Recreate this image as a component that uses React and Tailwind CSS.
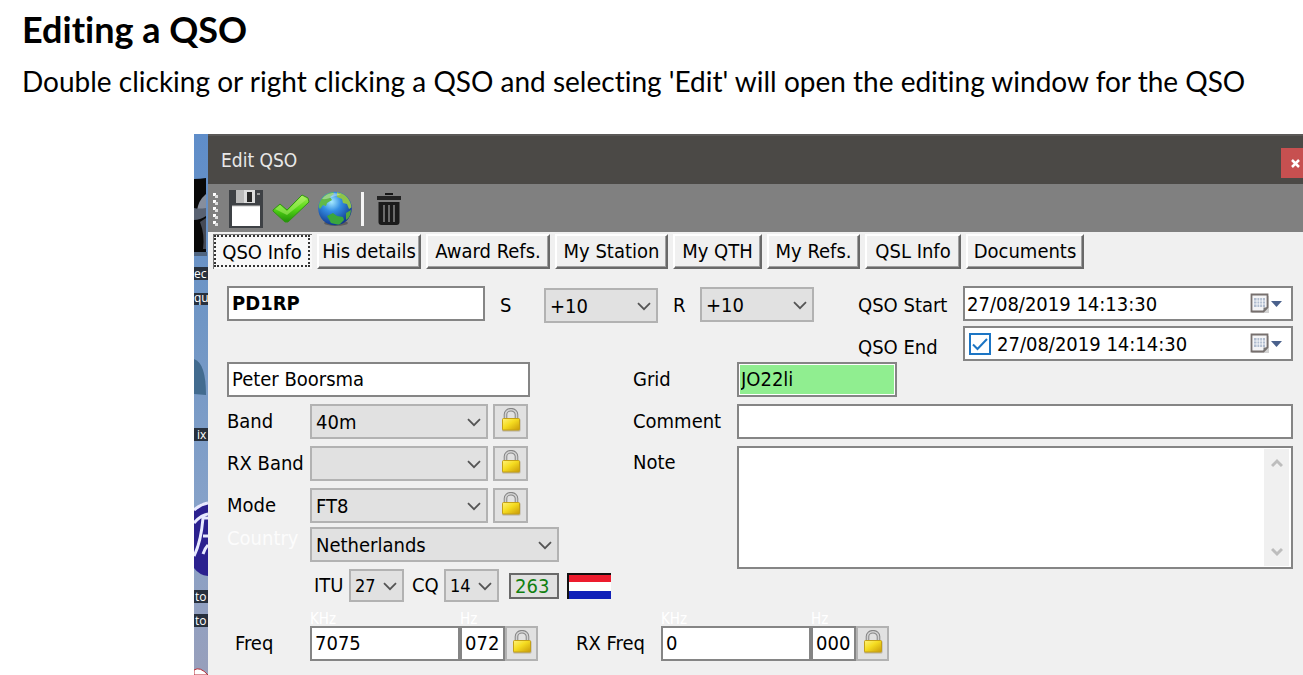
const tabs = [
  { label: 'QSO Info', width: 'w-[99px]', active: true },
  { label: 'His details', width: 'w-[104px]' },
  { label: 'Award Refs.', width: 'w-[124px]' },
  { label: 'My Station', width: 'w-[113px]' },
  { label: 'My QTH', width: 'w-[89px]' },
  { label: 'My Refs.', width: 'w-[93px]' },
  { label: 'QSL Info', width: 'w-[96px]' },
  { label: 'Documents', width: 'w-[118px]' },
]

const fieldClass = 'border-2 border-[#858585] bg-white outline-none h-[35px] px-[3px] pb-[2px]'

function Select({ id, label, value, className = '', small }) {
  return (
    <div className={`relative shrink-0 ${className}`}>
      <select
        id={id}
        aria-label={label}
        defaultValue={value}
        className={`block w-full h-full appearance-none border-2 border-[#b2b2b2] bg-[#e1e1e1] pl-1 outline-none ${small ? 'text-[18px]' : ''}`}
      >
        <option>{value}</option>
      </select>
      <svg viewBox="0 0 14 9" className="absolute right-[7px] top-1/2 -mt-[4px] w-[14px] h-[9px] pointer-events-none">
        <path d="M1 1.2 7 7.2 13 1.2" fill="none" stroke="#555" strokeWidth="1.8" />
      </svg>
    </div>
  )
}

function Lock() {
  return (
    <svg viewBox="0 0 20 25" className="w-5 h-[25px]">
      <defs>
        <linearGradient id="brass" x1="0" x2="1" y1="0" y2="1">
          <stop offset="0" stopColor="#fff27a" />
          <stop offset=".45" stopColor="#f5dc20" />
          <stop offset="1" stopColor="#c99a08" />
        </linearGradient>
      </defs>
      <path d="M4.500 12V6.500a5.500 4.800 0 0 1 11 0V12" fill="none" stroke="#858585" strokeWidth="3.600" />
      <path d="M4.500 12V6.500a5.500 4.800 0 0 1 11 0V12" fill="none" stroke="#d2d2d2" strokeWidth="1.600" />
      <rect x="1" y="10.500" width="18.500" height="13" rx="1.500" fill="#a0906a" opacity=".6" />
      <rect x="1.500" y="10.500" width="17" height="11.500" rx="1" fill="url(#brass)" stroke="#c4a117" />
    </svg>
  )
}

function LockButton({ label, className = 'w-[35px] h-[35px]' }) {
  return (
    <button aria-label={label} className={`flex items-center justify-center shrink-0 border-2 border-[#b2b2b2] bg-[#e1e1e1] pb-[2px] ${className}`}>
      <Lock />
    </button>
  )
}

function CalendarButton({ label }) {
  return (
    <button aria-label={label} className="shrink-0 mr-2">
      <svg viewBox="0 0 34 22" className="w-[34px] h-[22px]">
        <path d="M3 3h17v17H3z" fill="#aaa" opacity=".5" />
        <path d="M2.500 1.500h16v13l-4 4h-12z" fill="#f4f4f6" stroke="#77706e" strokeWidth="1.800" />
        <path d="M5 5h11v9H5z" fill="#b0bccf" />
        <path d="M5 8h11M5 11h11M8 5v9M10.700 5v9M13.400 5v9" stroke="#fff" strokeWidth=".8" />
        <path d="M14.500 18.500v-4h4z" fill="#777" />
        <path d="M22 8h11l-5.500 6z" fill="#4a618c" />
      </svg>
    </button>
  )
}

function DateField({ id, value, checkbox }) {
  return (
    <div className="flex-1 min-w-0 flex items-center h-[35px] border-2 border-[#858585] bg-white">
      {checkbox && (
        <span className="relative shrink-0 ml-1 w-[22px] h-[22px]">
          <input type="checkbox" aria-label="QSO End set" defaultChecked className="block w-full h-full appearance-none border-2 border-[#1c75c4] bg-white" />
          <svg viewBox="0 0 22 22" className="absolute inset-0 pointer-events-none">
            <path d="M4 11.500 8.500 16 18 6" fill="none" stroke="#1c75c4" strokeWidth="2" />
          </svg>
        </span>
      )}
      <input id={id} defaultValue={value} className={`flex-1 min-w-0 h-full outline-none bg-transparent ${checkbox ? 'pl-[6px]' : 'pl-[2px]'}`} />
      <CalendarButton label="Open calendar" />
    </div>
  )
}

function BandRow({ id, label, value }) {
  return (
    <div className="flex items-center">
      <label htmlFor={id} className="w-[83px] shrink-0 whitespace-nowrap pb-[2px]">{label}</label>
      <Select id={id} value={value} className="w-[178px] h-[35px] mr-[5px]" />
      <LockButton label={`Lock ${label}`} />
    </div>
  )
}

function Frequency({ id, label, khz, hz, className }) {
  return (
    <div className="flex items-end">
      <label htmlFor={id} className={`h-[35px] leading-[35px] shrink-0 ${className}`}>{label}</label>
      <div className="w-[150px]">
        <label htmlFor={id} className="block h-[15px] leading-[17px] text-[15px] text-white">KHz</label>
        <input id={id} defaultValue={khz} className={`block w-full ${fieldClass}`} />
      </div>
      <div className="w-[45px]">
        <label htmlFor={`${id}-hz`} className="block h-[15px] leading-[17px] text-[15px] text-white">Hz</label>
        <input id={`${id}-hz`} defaultValue={hz} className={`block w-full ${fieldClass}`} />
      </div>
      <LockButton label={`Lock ${label}`} className="w-[33px] h-[35px]" />
    </div>
  )
}

function Toolbar() {
  return (
    <div className="flex items-center h-12 bg-[#808080] pl-1 pt-[2px]">
      <svg viewBox="0 0 8 34" className="w-2 h-[34px] mr-[9px]">
        {[2, 9, 16, 23, 30].map((y) => (
          <g key={y}>
            <rect x="1" y={y - 1} width="3" height="3" fill="#fff" />
            <rect x="3" y={y + 1} width="3" height="3" fill="#ddd" />
          </g>
        ))}
      </svg>
      <button aria-label="Save">
        <svg viewBox="0 0 34 38" className="w-[34px] h-[38px]">
          <path d="M0 0h34v38H0z" fill="#3e4145" />
          <path d="M7 0h19v13H7z" fill="#dcdcdc" />
          <path d="M7 0h8v13H7z" fill="#bbb" />
          <path d="M18 2h5v10h-5z" fill="#282828" />
          <path d="M28 3h3v2h-3z" fill="#999" />
          <path d="M3 16h28v20H3z" fill="#fff" />
          <path d="M3 16h28" stroke="#c8c8c8" />
        </svg>
      </button>
      <button aria-label="Confirm" className="ml-[9px]">
        <svg viewBox="0 0 38 30" className="w-[38px] h-[30px]">
          <defs>
            <linearGradient id="leaf" x1="0" y1="0" x2="0" y2="1">
              <stop offset="0" stopColor="#a6ec55" />
              <stop offset=".5" stopColor="#55d916" />
              <stop offset="1" stopColor="#219008" />
            </linearGradient>
          </defs>
          <path d="M1 16 8 10l7 6L30 1l6 3 1 4L16 28h-3L1 17z" fill="url(#leaf)" stroke="#329414" />
          <path d="m3 15 5-4 7 6L30 2l5 3-20 16z" fill="#b3ef72" opacity=".5" />
        </svg>
      </button>
      <button aria-label="Look up online" className="ml-[7px]">
        <svg viewBox="0 0 36 36" className="w-9 h-9">
          <defs>
            <radialGradient id="sea" cx=".4" cy=".3" r=".7">
              <stop offset="0" stopColor="#a6eaff" />
              <stop offset=".4" stopColor="#348fe4" />
              <stop offset="1" stopColor="#12388d" />
            </radialGradient>
            <clipPath id="ball"><circle cx="18" cy="17.500" r="16.500" /></clipPath>
          </defs>
          <ellipse cx="19" cy="32" rx="12" ry="3" fill="#444" opacity=".6" />
          <circle cx="18" cy="17.500" r="16.800" fill="url(#sea)" />
          <g clipPath="url(#ball)">
            <path d="M1 15 3 7l7-5 6-2 1 3-4 3 2 3-5 3-1 3-3-1-3 4z" fill="#62b949" />
            <path d="m20 1 8 2 5 5 2 8-3 2-2-5-4-1-1-4-5-2z" fill="#8dc34a" />
            <path d="m10 25 6-3 4 3 6 1 1 3-5 5-8-2z" fill="#3ba63d" />
            <path d="m29 22 5-3-1 7-4 3z" fill="#53a640" />
            <path d="M5 8c4-6 13-8 19-4-7 0-12 5-19 4z" fill="#fff" opacity=".35" />
          </g>
        </svg>
      </button>
      <span className="w-[3px] h-[34px] bg-[#f5f5f5] ml-2" />
      <button aria-label="Delete" className="ml-[13px]">
        <svg viewBox="0 0 24 34" className="w-6 h-[34px]">
          <path d="M8 1h8v2H8z" fill="#171717" />
          <path d="M0 4h24v4H0z" fill="#242424" />
          <path d="M1.500 10h21v20q0 3-3 3h-15q-3 0-3-3z" fill="#1b1b1b" />
          <path d="M7 13v17M12 13v17M17 13v17" stroke="#858585" strokeWidth="1.500" />
        </svg>
      </button>
    </div>
  )
}

// sliver of the desktop that shows behind the dialog
function Desktop() {
  return (
    <div className="w-[14px] shrink-0 overflow-hidden bg-[#7598c6]">
      <svg viewBox="0 0 14 541" className="w-[14px] h-[541px]" fontFamily="'Open Sans', sans-serif" fontSize="12" fill="#fff">
        <defs>
          <linearGradient id="sky" x1="0" y1="0" x2="0" y2="1">
            <stop offset="0" stopColor="#5f8dc9" />
            <stop offset=".35" stopColor="#7096c5" />
            <stop offset=".7" stopColor="#87a2c9" />
            <stop offset="1" stopColor="#989fbb" />
          </linearGradient>
        </defs>
        <path d="M0 0h14v541H0z" fill="url(#sky)" />
        <path d="M0 45q6 0 12-1v74H0z" fill="#080808" />
        <path d="M2 84q1-14 6-20l4-4v20q-6 4-12 4z" fill="#868e9d" />
        <path d="M0 74q5 1 12 0v8q-6 4-12 4z" fill="#596272" />
        <path d="m6 88 6-4v31H9q2-14-3-27z" fill="#454a56" />
        <path d="M0 118h13v4H0z" fill="#506580" />
        <path d="M0 225q12 4 12 36l-12-1z" fill="#426b8f" />
        <path d="M0 375q8-7 14-7v74q-9-1-14-8z" fill="#2b218f" />
        <path d="M0 376q7-6 14-7M0 389q7-8 14-9M0 422q7-14 9-38h5M9 402h5M9 420q2-6 5-9" fill="none" stroke="#e8eaff" strokeWidth="3" />
        <path d="M0 133h14v13H0zM0 159h14v12H0zM0 294h14v13H0zM0 456h14v13H0zM0 480h14v13H0z" fill="#27303d" />
        <text x="0" y="144">ec</text>
        <text x="0" y="168">qu</text>
        <text x="3" y="305">ix</text>
        <text x="1" y="467">to</text>
        <text x="1" y="491">to</text>
        <path d="M0 536q6-4 14 5H0z" fill="#fff" stroke="#b52b35" />
      </svg>
    </div>
  )
}

export default function App() {
  return (
    <div className="min-h-screen flex flex-col bg-white text-black overflow-hidden">
      <header className="pl-[22px] h-[134px] shrink-0 whitespace-nowrap font-['Lato','Noto_Sans',sans-serif] [font-variant-ligatures:none]">
        <h1 className="pt-2 text-[36px] leading-[42px] font-bold">Editing a QSO</h1>
        <p className="pt-[13px] text-[28px] leading-[36px]">
          Double clicking or right clicking a QSO and selecting 'Edit' will open the editing window for the QSO
        </p>
      </header>

      <main className="flex-1 flex ml-[194px] text-[20px] leading-6 font-['DejaVu_Sans_Condensed','Noto_Sans',sans-serif]">
        <Desktop />
        <section className="flex-1 min-w-0 bg-[#f0f0f0]">
          <div className="flex items-center justify-between h-[50px] bg-[#4b4946] border-t-2 border-[#5b5957] pl-[13px] text-[#e8e8e8]">
            <h2 className="text-[19px]">Edit QSO</h2>
            <button aria-label="Close" className="flex items-center justify-end w-[22px] h-[30px] mt-[6px] pr-[3px] bg-[#c75050]">
              <svg viewBox="0 0 9 9" className="w-[9px] h-[9px]">
                <path d="m1 1 7 7M8 1 1 8" stroke="#fff" strokeWidth="2.500" />
              </svg>
            </button>
          </div>

          <Toolbar />

          <nav className="flex gap-[5px] pl-[5px] pt-[2px]">
            {tabs.map(({ label, width, active }) => (
              <button
                key={label}
                className={
                  active
                    ? `${width} h-[35px] shrink-0 whitespace-nowrap pr-[2px] pb-[2px] bg-[#f8f8f8] border-t border-l border-[#777]`
                    : `${width} h-[35px] shrink-0 whitespace-nowrap border-2 border-t-white border-l-white border-r-[#696969] border-b-[#696969] shadow-[inset_-1px_-1px_0_#a0a0a0] pb-[2px]`
                }
              >
                {active ? <span className="block h-full leading-[31px] border-2 border-dotted border-[#333]">{label}</span> : label}
              </button>
            ))}
          </nav>

          <form className="pl-[19px] pr-[10px] pt-[17px]">
            <div className="flex h-[76px]">
              <div className="flex items-start h-[37px]">
                <input aria-label="Callsign" defaultValue="PD1RP" className={`w-[258px] font-bold ${fieldClass}`} />
                <label htmlFor="sent" className="w-[59px] pl-[15px] leading-[38px]">S</label>
                <Select id="sent" value="+10" className="w-[114px] h-[35px] mt-[2px]" />
                <label htmlFor="rcvd" className="w-[42px] pl-[15px] leading-[38px]">R</label>
                <Select id="rcvd" value="+10" className="w-[114px] h-[35px] mt-px" />
              </div>
              <div className="flex-1 min-w-0 pl-[44px] flex flex-col gap-[5px]">
                <div className="flex">
                  <label htmlFor="start" className="w-[105px] shrink-0 leading-[38px] h-[35px]">QSO Start</label>
                  <DateField id="start" value="27/08/2019 14:13:30" />
                </div>
                <div className="flex">
                  <label htmlFor="end" className="w-[105px] shrink-0 leading-[42px] h-[35px]">QSO End</label>
                  <DateField id="end" value="27/08/2019 14:14:30" checkbox />
                </div>
              </div>
            </div>

            <div className="flex">
              <div className="w-[406px] shrink-0">
                <div className="flex flex-col gap-[7px]">
                  <input aria-label="Name" defaultValue="Peter Boorsma" className={`w-[303px] ${fieldClass}`} />
                  <BandRow id="band" label="Band" value="40m" />
                  <BandRow id="rxband" label="RX Band" value="" />
                  <BandRow id="mode" label="Mode" value="FT8" />
                </div>
                <div className="flex items-start mt-1">
                  <label htmlFor="country" className="w-[83px] shrink-0 leading-[22px] text-[#fcfcfc]">Country</label>
                  <Select id="country" value="Netherlands" className="w-[249px] h-[35px]" />
                </div>
                <div className="flex items-center mt-[7px] pl-[87px]">
                  <label htmlFor="itu" className="w-[35px] pb-[2px]">ITU</label>
                  <Select id="itu" value="27" small className="w-[55px] h-[33px]" />
                  <label htmlFor="cq" className="w-10 pl-2 pb-[2px]">CQ</label>
                  <Select id="cq" value="14" small className="w-[55px] h-[33px]" />
                  <input aria-label="DXCC" readOnly defaultValue="263" className="w-[50px] h-[26px] ml-[10px] border-2 border-[#696969] bg-[#e1e1e1] pl-1 text-[#108010] outline-none" />
                  <svg viewBox="0 0 44 26" className="w-11 h-[26px] ml-2 shrink-0">
                    <path d="M0 0h44v26H0z" fill="#fff" />
                    <path d="M0 0h44v9H0z" fill="#ed1c2e" />
                    <path d="M0 18h44v8H0z" fill="#1020b8" />
                    <path d="M1 26V1h43" fill="none" stroke="#111" strokeWidth="2" />
                  </svg>
                </div>
              </div>

              <div className="flex-1 min-w-0 flex flex-col gap-[7px]">
                <div className="flex items-center">
                  <label htmlFor="grid" className="w-[104px] shrink-0 pb-[2px]">Grid</label>
                  <input id="grid" defaultValue="JO22li" className="w-[160px] h-[35px] border-2 border-[#858585] bg-[#90ee90] px-[2px] pb-[2px] shadow-[inset_0_0_0_1px_#fff] outline-none" />
                </div>
                <div className="flex items-center">
                  <label htmlFor="comment" className="w-[104px] shrink-0 pb-[2px]">Comment</label>
                  <input id="comment" className={`flex-1 min-w-0 ${fieldClass}`} />
                </div>
                <div className="flex">
                  <label htmlFor="note" className="w-[104px] shrink-0 leading-[32px]">Note</label>
                  <div className="flex-1 min-w-0 flex h-[123px] border-2 border-[#858585] bg-white">
                    <textarea id="note" className="flex-1 min-w-0 resize-none outline-none" />
                    <div className="w-[25px] my-px mr-[2px] bg-[#f0f0f0] flex flex-col items-center justify-between py-[9px]">
                      <svg viewBox="0 0 12 10" className="w-3 h-[10px]"><path d="m1 8 5-5 5 5" fill="none" stroke="#bdbdbd" strokeWidth="3" /></svg>
                      <svg viewBox="0 0 12 10" className="w-3 h-[10px]"><path d="m1 2 5 5 5-5" fill="none" stroke="#bdbdbd" strokeWidth="3" /></svg>
                    </div>
                  </div>
                </div>
              </div>
            </div>

            <div className="flex gap-[38px] mt-[9px]">
              <Frequency id="freq" label="Freq" khz="7075" hz="072" className="w-[83px] pl-2" />
              <Frequency id="rxfreq" label="RX Freq" khz="0" hz="000" className="w-[85px]" />
            </div>
          </form>
        </section>
      </main>
    </div>
  )
}
